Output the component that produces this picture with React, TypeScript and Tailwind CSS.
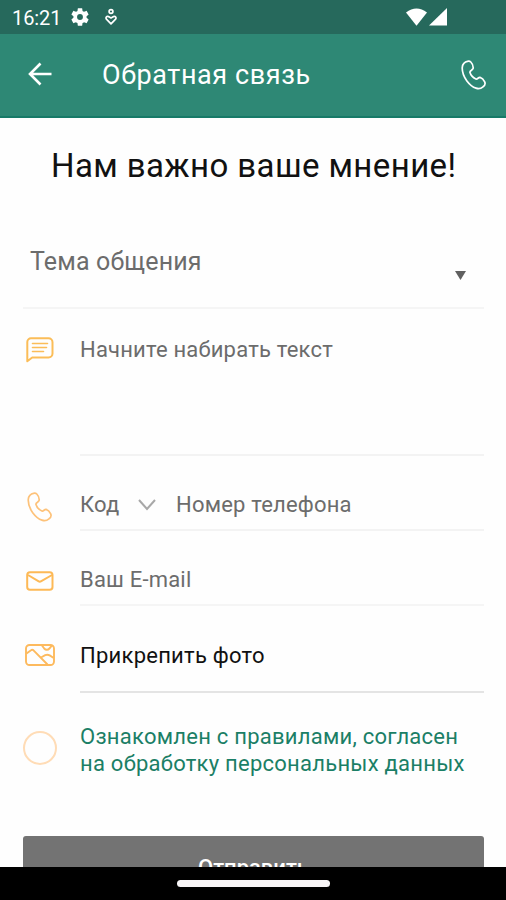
import React from 'react';

interface IconProps {
  className?: string;
}

const PhoneIcon = ({ className = '' }: IconProps) => (
  <svg viewBox="0 0 25 30" fill="none" stroke="currentColor" strokeWidth="1.700" strokeLinejoin="round" className={className}>
    <path d="M3 3.200C4.800 1.200 8.300.6 9.800 2c1.400 1.400 2.500 4.200 2.400 6.200C12 10 8.700 10.500 8.900 12.300c.7 2.600 3.400 5.500 6 6.700 1.700.6 2.400-1.900 4.100-1.600 1.700.5 3.900 2.800 4.700 4.400.8 1.800-.2 3.900-1.700 5-2 1.700-4.800 2.200-7 1.300C9 26.200 1.300 17.500 1.200 8c0-2 .6-3.500 1.800-4.800z" />
  </svg>
);

const MessageIcon = () => (
  <svg viewBox="0 0 28 26" fill="none" stroke="currentColor" className="h-[26px] w-7">
    <path d="M5 1.300h17.500a4 4 0 0 1 4 4v11.200a4 4 0 0 1-4 4H6.200L1.300 24.300V5a3.700 3.700 0 0 1 3.700-3.700z" strokeWidth="2" strokeLinejoin="round" />
    <path d="M6.500 6.500h15M6.500 10.500h14M6.500 14.500h11" strokeWidth="1.600" strokeLinecap="round" />
  </svg>
);

const MailIcon = () => (
  <svg viewBox="0 0 28 20" fill="none" stroke="currentColor" strokeWidth="2" strokeLinejoin="round" className="h-5 w-7">
    <rect x="1.200" y="1.200" width="25.300" height="17.600" rx="2.800" />
    <path d="M2 4l10.300 6.200c1 .6 2 .6 3 0L26 4" />
  </svg>
);

const PhotoIcon = () => (
  <svg viewBox="0 0 30 22" fill="none" stroke="currentColor" strokeWidth="1.900" strokeLinejoin="round" className="h-[22px] w-[30px]">
    <rect x="1" y="1" width="28" height="20" rx="3.500" />
    <path d="M1.500 9.500L6 6.200c.9-.7 1.700-.6 2.500.1L22.500 20.500M16 13.500l4.200-2.300c1.500-.7 3-.6 4.500.2l4 2.600" />
    <path d="M17 1.500l2.200 3c1.500 1.600 3.800 1.600 5.200 0l2.600-3" />
  </svg>
);

const StatusBar = () => (
  <div className="flex h-[34px] shrink-0 items-center bg-[#26695c] pl-3 text-white">
    <span className="w-[51px] whitespace-nowrap pt-0.5 text-[20px] tracking-[-0.1px]">16:21</span>
    <svg viewBox="0 0 24 24" fill="currentColor" className="ml-[6px] h-[22px] w-[22px]">
      <path d="M19.140 12.940c.04-.3.060-.610.060-.940 0-.320-.020-.640-.070-.940l2.030-1.580c.180-.140.230-.410.120-.610l-1.920-3.320c-.120-.220-.370-.290-.590-.220l-2.390.960c-.5-.380-1.030-.7-1.620-.940l-.360-2.540c-.040-.240-.240-.410-.480-.410h-3.840c-.240 0-.430.170-.470.410l-.360 2.540c-.590.240-1.130.570-1.620.940l-2.390-.960c-.220-.080-.470 0-.590.220L2.740 8.870c-.120.210-.080.470.120.610l2.030 1.580c-.050.3-.090.630-.090.940s.020.640.070.940l-2.030 1.580c-.180.140-.230.410-.120.610l1.920 3.320c.120.220.370.290.590.220l2.390-.960c.5.380 1.030.7 1.620.940l.360 2.540c.050.240.240.410.480.410h3.840c.240 0 .440-.170.470-.410l.360-2.540c.590-.240 1.130-.560 1.620-.940l2.390.960c.220.080.470 0 .590-.220l1.920-3.320c.120-.220.070-.470-.120-.610l-2.010-1.580zM12 15.200A3.200 3.200 0 1 1 12 8.800a3.200 3.200 0 0 1 0 6.400z" />
    </svg>
    <svg viewBox="0 0 14 18" fill="none" stroke="currentColor" className="ml-[13px] h-[18px] w-[14px]">
      <circle cx="7" cy="3.500" r="1.900" strokeWidth="1.700" />
      <path d="M7 15.800L2.400 11.200c-1.200-1.600.3-3.200 2-2.600L7 10l2.600-1.400c1.700-.6 3.200 1 2 2.600z" strokeWidth="1.700" strokeLinejoin="round" />
    </svg>
    <svg viewBox="0 0 44 20" fill="currentColor" className="ml-auto mr-[57px] h-5 w-[44px]">
      <path d="M1 5.500Q11.500-2.500 22 5.500L11.500 18.800z" />
      <path d="M42 1v17.500H24z" />
    </svg>
  </div>
);

const Header = () => (
  <header className="flex h-[84px] shrink-0 items-center border-b-2 border-[#177a68] bg-[#2e8875] pl-7 pr-5 text-white">
    <svg viewBox="0 0 24 24" fill="none" stroke="currentColor" strokeWidth="2.600" className="-mt-0.5 h-6 w-6">
      <path d="M23.500 12H2.500M12.500 1.500L2 12l10.500 10.500" />
    </svg>
    <h1 className="ml-[50px] whitespace-nowrap text-[27px] leading-8 tracking-[0.6px]">Обратная связь</h1>
    <PhoneIcon className="ml-auto h-[30px] w-[25px]" />
  </header>
);

export default function App() {
  return (
    <div className="flex h-[900px] w-[506px] flex-col overflow-hidden bg-[#fefefe] font-['Roboto',sans-serif] text-[22px] text-[#6c6c6c]">
      <StatusBar />
      <Header />

      <main className="flex min-h-0 flex-1 flex-col overflow-hidden pl-[23px] pr-[22px]">
        <h2 className="mt-[28px] h-10 shrink-0 whitespace-nowrap pl-[28px] text-[33px] leading-10 tracking-[0.4px] text-[#111]">
          Нам важно ваше мнение!
        </h2>

        {/* Topic select */}
        <div className="mt-[44px] flex h-[79px] shrink-0 justify-between border-b-2 border-[#f5f5f5] pl-[7px] pr-[18px]">
          <span className="pt-[16px] text-[25px] leading-8 tracking-[0.150px]">Тема общения</span>
          <svg viewBox="0 0 11 9" fill="currentColor" className="mt-[41px] h-[9px] w-[11px] text-[#606060]">
            <path d="M0 0h11L5.500 9z" />
          </svg>
        </div>

        {/* Message */}
        <div className="flex h-[147px] shrink-0">
          <div className="w-[57px] shrink-0 pl-[3px] pt-[28px] text-[#fbbd58]">
            <MessageIcon />
          </div>
          <div className="flex-1 whitespace-nowrap border-b-2 border-[#f3f3f3] pt-[26px] leading-[30px] tracking-[0.2px]">
            Начните набирать текст
          </div>
        </div>

        {/* Phone */}
        <div className="flex h-[75px] shrink-0">
          <div className="w-[57px] shrink-0 pl-[4px] pt-[36px] text-[#fdc27a]">
            <PhoneIcon className="h-[30px] w-[25px]" />
          </div>
          <div className="flex flex-1 border-b-2 border-[#f3f3f3] pt-[34px] leading-[30px] tracking-[0.2px]">
            <span className="w-[58px]">Код</span>
            <svg viewBox="0 0 18 12" fill="none" stroke="currentColor" strokeWidth="2" className="mt-[9px] h-3 w-[18px] text-[#a8a8a8]">
              <path d="M1 1l8 9 8-9" />
            </svg>
            <span className="ml-[20px] whitespace-nowrap">Номер телефона</span>
          </div>
        </div>

        {/* Email */}
        <div className="flex h-[75px] shrink-0">
          <div className="w-[57px] shrink-0 pl-[3px] pt-[40px] text-[#fdb956]">
            <MailIcon />
          </div>
          <div className="flex-1 border-b-2 border-[#f5f5f5] pt-[34px] leading-[30px] tracking-[0.2px]">Ваш E-mail</div>
        </div>

        {/* Attachment */}
        <div className="flex h-[87px] shrink-0">
          <div className="w-[57px] shrink-0 pl-[2px] pt-[38px] text-[#fdba5e]">
            <PhotoIcon />
          </div>
          <div className="flex-1 border-b-2 border-[#e4e4e4] pt-[35px] leading-[30px] tracking-[0.250px] text-[#111]">
            Прикрепить фото
          </div>
        </div>

        {/* Agreement */}
        <div className="flex h-[143px] shrink-0">
          <div className="w-[57px] shrink-0 pt-[38px]">
            <div className="h-[34px] w-[34px] rounded-full border-2 border-[#ffdcb6]" />
          </div>
          <p className="whitespace-nowrap pt-[30px] leading-[27px] tracking-[0.250px] text-[#1b7f66]">
            Ознакомлен с правилами, согласен
            <br />
            на обработку персональных данных
          </p>
        </div>

        <button className="h-[64px] shrink-0 rounded-[3px] bg-[#737373] pb-0.5 text-[22px] font-medium text-white">
          Отправить
        </button>
      </main>

      <div className="flex h-[33px] shrink-0 justify-center bg-black pt-[13px]">
        <div className="h-[7px] w-[153px] rounded-full bg-[#f8f5f7]" />
      </div>
    </div>
  );
}
